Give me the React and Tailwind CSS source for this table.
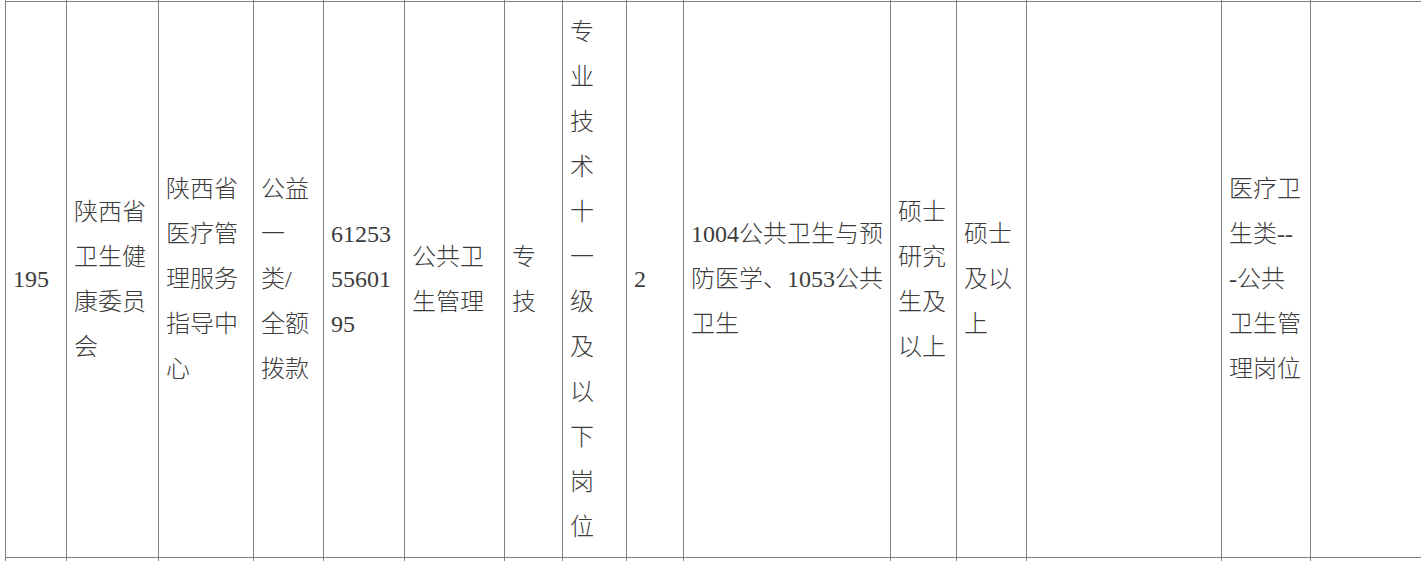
const cols = [
  { w: 'w-[61px]', lines: ['195'] },
  { w: 'w-[92px]', lines: ['陕西省', '卫生健', '康委员', '会'] },
  { w: 'w-[95px]', lines: ['陕西省', '医疗管', '理服务', '指导中', '心'] },
  { w: 'w-[70px]', lines: ['公益', '一', '类/', '全额', '拨款'] },
  { w: 'w-[81px]', lines: ['61253', '55601', '95'] },
  { w: 'w-[100px]', lines: ['公共卫', '生管理'] },
  { w: 'w-[58px]', lines: ['专', '技'] },
  { w: 'w-[64px]', lines: ['专', '业', '技', '术', '十', '一', '级', '及', '以', '下', '岗', '位'] },
  { w: 'w-[57px]', lines: ['2'] },
  { w: 'w-[207px]', lines: ['1004公共卫生与预', '防医学、1053公共', '卫生'] },
  { w: 'w-[66px]', lines: ['硕士', '研究', '生及', '以上'] },
  { w: 'w-[70px]', lines: ['硕士', '及以', '上'] },
  { w: 'w-[195px]', lines: [] },
  { w: 'w-[89px]', lines: ['医疗卫', '生类--', '-公共', '卫生管', '理岗位'] },
  { w: 'w-[200px]', lines: [] },
];

// latin runs keep the regular serif face, CJK gets the light face
const Line = ({ text }) => (
  <div className="whitespace-nowrap leading-[45px]">
    {text.split(/([0-9/\-]+)/).map((part, k) =>
      /[0-9/\-]/.test(part) ? (
        <span key={k} className="font-normal">{part}</span>
      ) : (
        <span key={k}>{part}</span>
      )
    )}
  </div>
);

const Row = ({ height, withText }) => (
  <div className={`flex ${height} border-b border-[#808080]`}>
    {cols.map((c, i) => (
      <div
        key={i}
        className={`${c.w} shrink-0 border-l border-[#808080] pl-[7px] flex flex-col justify-center`}
      >
        {withText && c.lines.map((l, j) => <Line key={j} text={l} />)}
      </div>
    ))}
  </div>
);

export default function App() {
  return (
    <div className="w-[1421px] h-[561px] overflow-hidden bg-white text-[24px] font-light text-[#3c3c3c] font-['Liberation_Serif','Noto_Sans_CJK_SC',serif]">
      <div className="ml-[5px] -mt-[20px] w-max">
        <Row height="h-[22px]" />
        <Row height="h-[556px]" withText />
        <Row height="h-[20px]" />
      </div>
    </div>
  );
}
